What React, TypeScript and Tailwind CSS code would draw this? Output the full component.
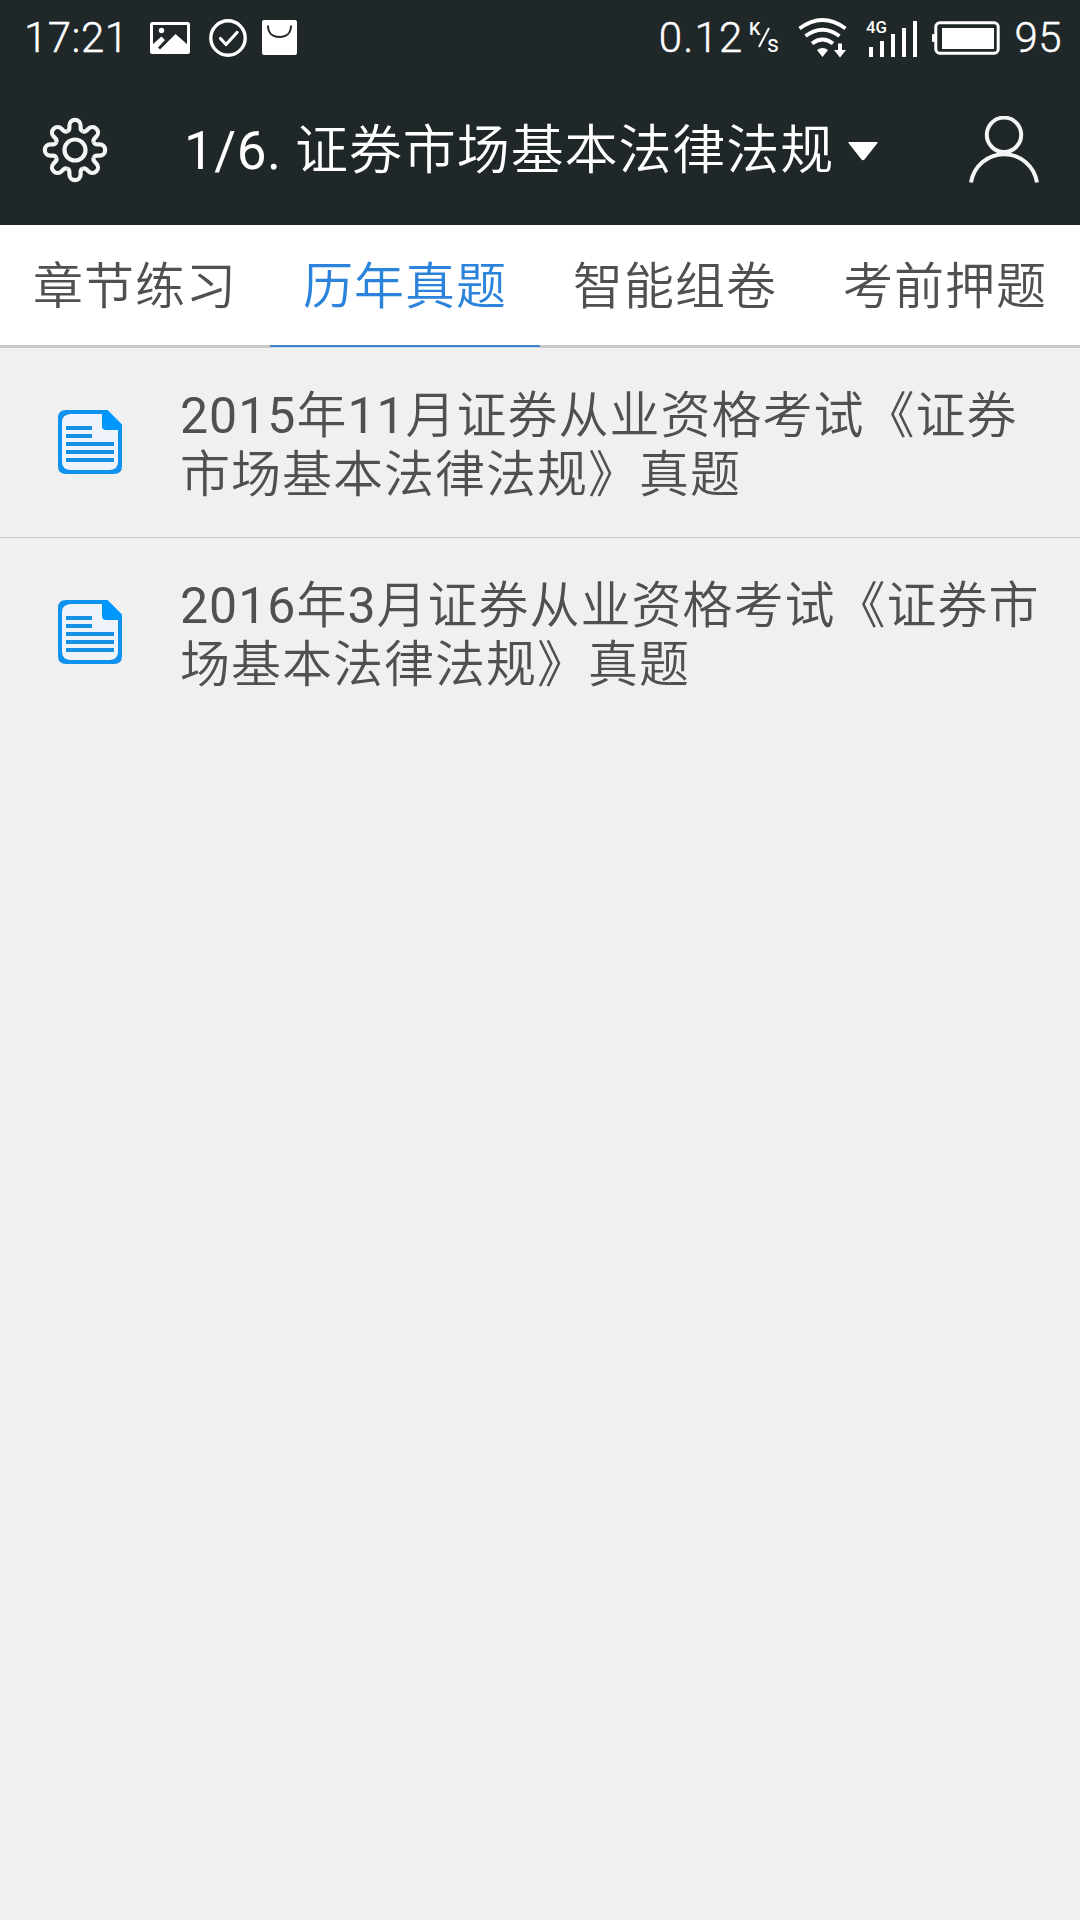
const lobes = [0, 45, 90, 135, 180, 225, 270, 315];

const tabs = [
  { label: "章节练习", active: false },
  { label: "历年真题", active: true },
  { label: "智能组卷", active: false },
  { label: "考前押题", active: false },
];

const papers = [
  ["2015年11月证券从业资格考试《证券", "市场基本法律法规》真题"],
  ["2016年3月证券从业资格考试《证券市", "场基本法律法规》真题"],
];

function MixedText({ text }: { text: string }) {
  return (
    <>
      {text.split(/([0-9]+)/).map((part, i) =>
        i % 2 === 1 ? (
          <span key={i} className="font-normal">
            {part}
          </span>
        ) : (
          part
        ),
      )}
    </>
  );
}

function StatusBar() {
  return (
    <div className="flex h-[75px] items-center font-light text-[42px] leading-[75px] text-white [-webkit-text-stroke:0.4px_white]">
      <span className="ml-[24px] w-[126px] tracking-[0.5px]">17:21</span>
      <svg className="h-[32px] w-[40px]" viewBox="0 0 40 32">
        <rect x="1.5" y="1.5" width="37" height="29" rx="1" fill="none" stroke="#fff" strokeWidth="3" />
        <circle cx="11.5" cy="8.5" r="2.7" fill="#fff" />
        <path d="M2 23L11.5 14.5L15 18L8 25.5L10 27.5L25.5 12L38 23V31H2Z" fill="#fff" />
      </svg>
      <svg className="ml-[19px] h-[38px] w-[38px]" viewBox="0 0 38 38">
        <circle cx="19" cy="19" r="17.2" fill="none" stroke="#fff" strokeWidth="3.4" />
        <path d="M11.5 19.5L17 25.5L28 13.5" fill="none" stroke="#fff" strokeWidth="3.2" strokeLinecap="round" strokeLinejoin="round" />
      </svg>
      <svg className="ml-[15px] h-[35px] w-[35px]" viewBox="0 0 35 35">
        <rect width="35" height="35" rx="2" fill="#fff" />
        <path d="M6 5.5C6 13.5 11 17 17.5 17S29 13.5 29 5.5" fill="none" stroke="#202729" strokeWidth="2" />
      </svg>
      <span className="ml-auto tracking-[1.2px]">0.12</span>
      <svg className="ml-[7px] h-[48px] w-[32px] overflow-visible [-webkit-text-stroke:0]" viewBox="0 0 32 48">
        <text x="-1" y="20.5" fontSize="18" fontWeight="500" fill="#fff">K</text>
        <text x="17" y="37.5" fontSize="23" fontWeight="400" fill="#fff">s</text>
        <path d="M9 33L19 14" stroke="#fff" strokeWidth="2" />
      </svg>
      <svg className="ml-[16px] h-[40px] w-[49px]" viewBox="0 0 49 40">
        <g fill="none" stroke="#fff" strokeWidth="3.8">
          <path d="M1.5 10.5Q24.5 -6.5 47.5 10.5" />
          <path d="M7.5 18Q24.5 5.5 41.5 18" />
          <path d="M14 25.5Q24.5 17.5 35 25.5" />
        </g>
        <path d="M19 32Q24.5 28 30 32L24.5 39Z" fill="#fff" />
        <path d="M40 25.5H44V32H48L42 39.5L36 32H40Z" fill="#fff" />
      </svg>
      <svg className="ml-[20px] h-[46px] w-[52px] overflow-visible [-webkit-text-stroke:0]" viewBox="0 -4 52 46">
        <text x="-1" y="13.5" fontSize="17" fontWeight="500" fill="#fff" textLength="21" lengthAdjust="spacingAndGlyphs">4G</text>
        <path d="M2 28h4v10H2zM13 22h4v16h-4zM24 15h4v23h-4zM35 9h4v29h-4zM46 2h4v36h-4z" fill="#fff" />
      </svg>
      <svg className="ml-[13px] h-[34px] w-[68px]" viewBox="0 0 68 34">
        <rect x="3.8" y="1.8" width="62.4" height="30.4" rx="4" fill="none" stroke="#fff" strokeWidth="3" />
        <rect x="0" y="13" width="3" height="8" rx="1" fill="#fff" />
        <rect x="10" y="7" width="52" height="21" fill="#fff" />
      </svg>
      <span className="ml-[14px] mr-[18px] tracking-[0.5px]">95</span>
    </div>
  );
}

function GearIcon() {
  return (
    <svg className="h-[66px] w-[66px]" viewBox="-33 -33 66 66" fill="none" stroke="#f4f5f5" strokeWidth="4.2">
      <circle r="10.5" />
      {lobes.map((angle) => (
        <path
          key={angle}
          transform={`rotate(${angle})`}
          d="M-7.79 -18.8Q-5.6 -19.7 -5.6 -22V-24.6A5.6 5.6 0 0 1 5.6 -24.6V-22Q5.6 -19.7 7.79 -18.8"
        />
      ))}
    </svg>
  );
}

function PersonIcon() {
  return (
    <svg className="h-[68px] w-[72px]" viewBox="0 0 72 68" fill="none" stroke="#f4f5f5" strokeWidth="4">
      <circle cx="36" cy="18.8" r="17.2" />
      <path d="M3 66.5A33.4 33.4 0 0 1 69 66.5" />
    </svg>
  );
}

function DocumentIcon() {
  return (
    <svg className="mb-[2px] ml-[58px] h-[64px] w-[64px] shrink-0" viewBox="0 0 64 64">
      <path d="M2 8Q2 2 8 2H48L62 16V56Q62 62 56 62H8Q2 62 2 56Z" fill="#eef4f9" stroke="#0f93ee" strokeWidth="4" />
      <path d="M4 4H12Q4 5 4 12ZM4 60V52Q4 59 12 60ZM60 60H52Q60 59 60 52Z" fill="#0f93ee" />
      <path d="M44 0H49.5L64 14.5V20H48Q44 20 44 16Z" fill="#0097fd" />
      <path d="M8 18H34M8 26H34M8 34H56M8 42H56M8 50H56" stroke="#1691e6" strokeWidth="4" />
    </svg>
  );
}

export default function App() {
  return (
    <div className="flex h-[1920px] w-[1080px] flex-col overflow-hidden bg-[#f0f0f0] [font-family:Roboto,'Noto_Sans_CJK_SC',sans-serif]">
      <header className="h-[225px] shrink-0 bg-[#202729]">
        <StatusBar />
        <div className="flex h-[150px] items-center text-white">
          <div className="ml-[42px] w-[142px]">
            <GearIcon />
          </div>
          <h1 className="w-[649px] whitespace-nowrap pt-[2px] font-[350] text-[53px] leading-[60px] tracking-[0.9px]">
            <span className="font-normal tracking-[0.5px]">1/6. </span>证券市场基本法律法规
          </h1>
          <svg className="ml-[14px] mt-[2px] h-[20px] w-[32px]" viewBox="0 0 32 20">
            <path d="M2 1H30Q31 1 30.5 2L17.5 18.5Q16 20 14.5 18.5L1.5 2Q1 1 2 1Z" fill="#fff" />
          </svg>
          <div className="ml-auto mr-[40px]">
            <PersonIcon />
          </div>
        </div>
      </header>
      <nav className="grid h-[123px] shrink-0 grid-cols-4 bg-white font-[350] text-[50px] leading-[120px] tracking-[1px]">
        {tabs.map((tab) => (
          <div key={tab.label} className="flex flex-col text-center">
            <div className={tab.active ? "h-[120px] pt-[2px] text-[#2b83dc]" : "h-[120px] pt-[2px] text-[#505050]"}>
              {tab.label}
            </div>
            <div className={tab.active ? "h-[3px] border-b border-[#c5dcf0] bg-[#3d82c4]" : "h-[3px] bg-[#c8c8c8]"} />
          </div>
        ))}
      </nav>
      <main>
        {papers.map((lines, i) => (
          <div
            key={lines[0]}
            className={i === 0 ? "flex h-[190px] items-center border-b border-[#c8c8c8]" : "flex h-[190px] items-center"}
          >
            <DocumentIcon />
            <p
              className={
                i === 0
                  ? "ml-[58px] whitespace-nowrap pt-[6px] font-[350] text-[50px] leading-[59px] tracking-[1px] text-[#505050]"
                  : "ml-[58px] whitespace-nowrap pt-[5px] font-[350] text-[50px] leading-[59px] tracking-[1px] text-[#505050]"
              }
            >
              <MixedText text={lines[0]} />
              <br />
              <MixedText text={lines[1]} />
            </p>
          </div>
        ))}
      </main>
    </div>
  );
}
